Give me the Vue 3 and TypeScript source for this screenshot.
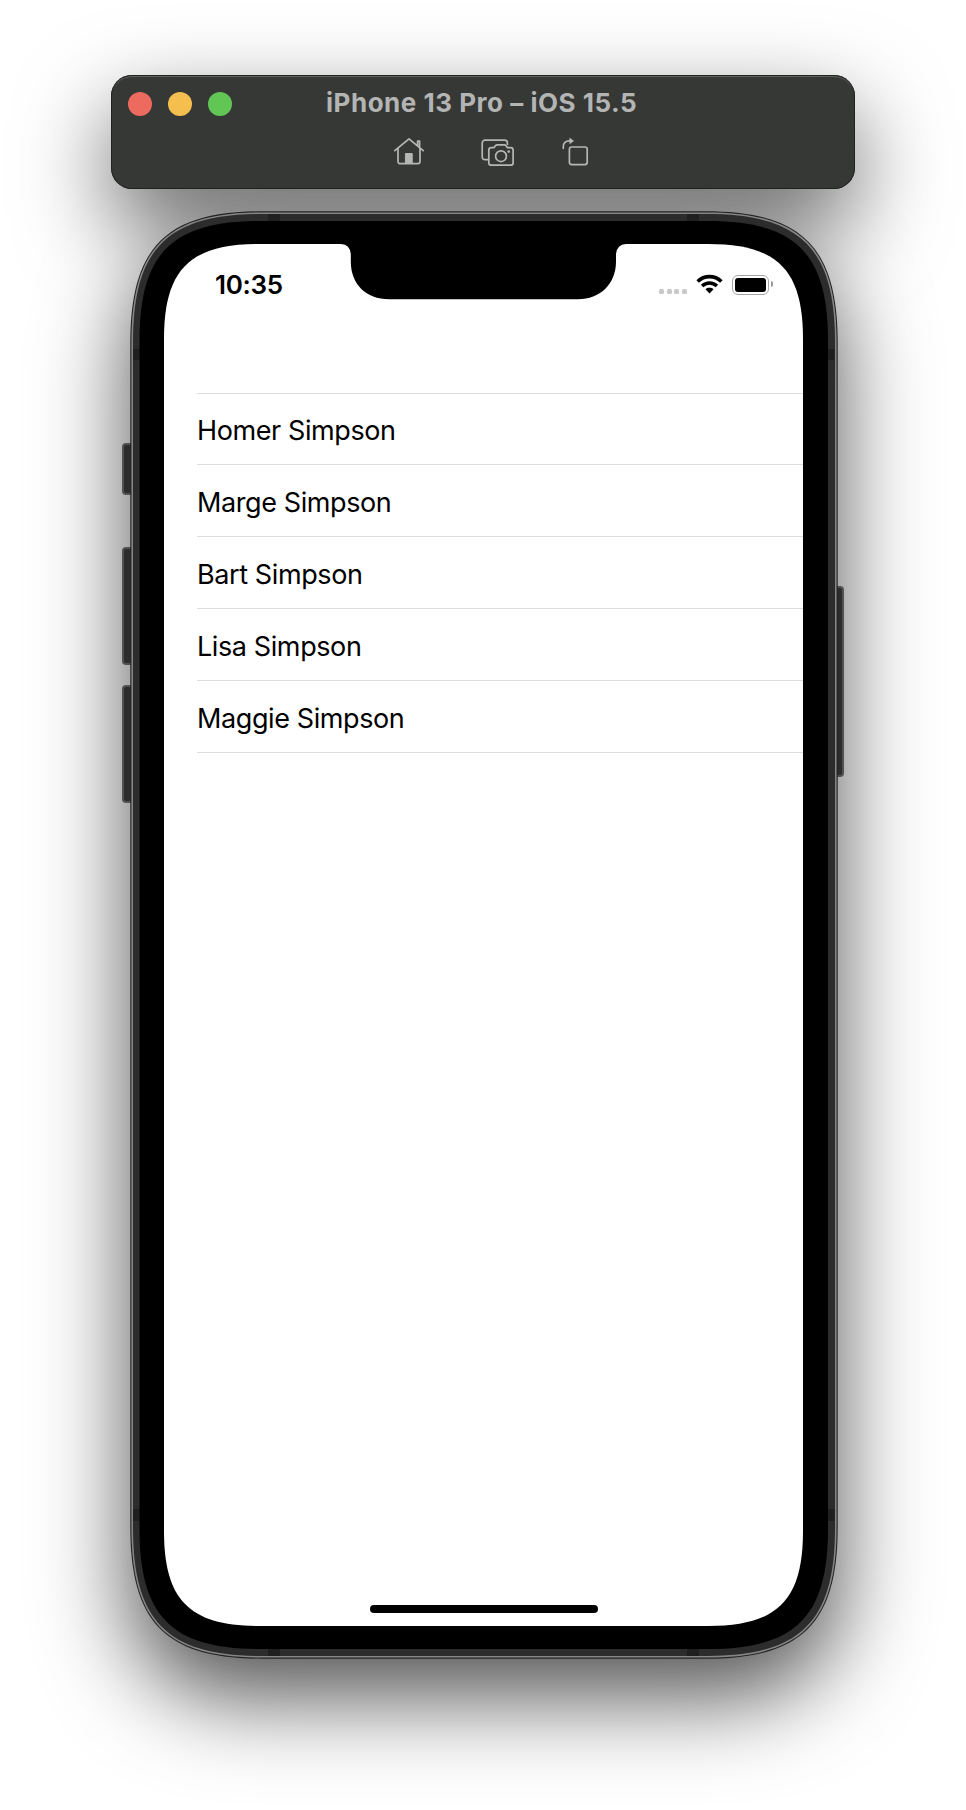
<script setup lang="ts">
const people: string[] = ['Homer Simpson', 'Marge Simpson', 'Bart Simpson', 'Lisa Simpson', 'Maggie Simpson']

/** Closed path of a rectangle whose corners ease in over `a` pixels of each side. */
function smoothRect(x: number, y: number, w: number, h: number, a: number): string {
  const c = a * 0.27
  const r = x + w
  const b = y + h
  return [
    `M${x + a},${y} H${r - a} C${r - c},${y} ${r},${y + c} ${r},${y + a}`,
    `V${b - a} C${r},${b - c} ${r - c},${b} ${r - a},${b}`,
    `H${x + a} C${x + c},${b} ${x},${b - c} ${x},${b - a}`,
    `V${y + a} C${x},${y + c} ${x + c},${y} ${x + a},${y}Z`,
  ].join(' ')
}

const rim = smoothRect(0.3, 0.3, 707.4, 1447.4, 132)
const rimLight = smoothRect(1.4, 1.4, 705.2, 1445.2, 130)
const band = smoothRect(3, 3, 702, 1442, 128)
const bezel = smoothRect(9.5, 10, 688.5, 1428, 120)
const display = smoothRect(34, 33, 639, 1382, 95)
</script>

<template>
  <main class="desktop">
    <header class="toolbar">
      <div class="title-row">
        <div class="lights"><i class="red"></i><i class="yellow"></i><i class="green"></i></div>
        <h1>iPhone 13 Pro – iOS 15.5</h1>
      </div>
      <nav class="actions">
        <svg class="home" width="32" height="30" viewBox="0 0 32 30" fill="none" stroke="#b5b7b6" stroke-width="1.7" stroke-linecap="round" stroke-linejoin="round">
          <path d="M1.800 14.600 16 2.800 30.200 14.600M5 12.500V25.500a2.200 2.200 0 0 0 2.200 2.200h17.600a2.200 2.200 0 0 0 2.200-2.200V12.500M24.600 9.500V5.200h2v5.900" />
          <path d="M12.800 17.500h6.400v10h-6.400z" fill="#b5b7b6" stroke-width="1" />
        </svg>
        <svg class="camera" width="34" height="28" viewBox="0 0 34 28" fill="none" stroke="#b5b7b6" stroke-width="1.7" stroke-linejoin="round">
          <path d="M7.300 20.700H4A2.800 2.800 0 0 1 1.200 17.900V4A2.800 2.800 0 0 1 4 1.200h19.600A2.800 2.800 0 0 1 26.400 4v2" />
          <path d="M10.300 8.600h2.600l1.500-1.900q.7-.8 1.700-.8h7.200q1 0 1.700.8l1.500 1.900h3.100A2.500 2.500 0 0 1 32.100 11.100V23.700A2.500 2.500 0 0 1 29.600 26.200H10.300A2.500 2.500 0 0 1 7.800 23.700V11.100A2.500 2.500 0 0 1 10.300 8.600Z" />
          <circle cx="20" cy="17.200" r="5.400" />
          <circle cx="27.700" cy="12.600" r="1.300" fill="#b5b7b6" stroke="none" />
        </svg>
        <svg class="rotate" width="28" height="29" viewBox="0 0 28 29" fill="none" stroke="#b5b7b6" stroke-width="1.700" stroke-linecap="round">
          <rect x="7.400" y="10" width="17.800" height="17.600" rx="2.300" />
          <path d="M1.300 11.300V9.500a5.700 5.700 0 0 1 5.700-5.700h1.300" />
          <path d="M7.500.6 12 3.900 7.500 7.300Z" fill="#b5b7b6" stroke="none" />
        </svg>
      </nav>
    </header>

    <section class="phone">
      <div class="button mute"></div>
      <div class="button vol-up"></div>
      <div class="button vol-down"></div>
      <div class="button power"></div>
      <svg class="case" width="708" height="1448" viewBox="0 0 708 1448">
        <path :d="rim" fill="#222" />
        <path :d="rimLight" fill="#858585" />
        <path :d="band" fill="#2c2c2c" />
        <path d="M138 3h12v7h-12zM557 3h12v7h-12zM138 1438h12v7h-12zM557 1438h12v7h-12zM3 138h6.500v11H3zM698 138h6.500v11H698zM3 1298h6.500v12H3zM698 1298h6.500v12H698z" fill="#1f1f1f" />
        <path :d="bezel" fill="#000" />
        <path :d="display" fill="#fff" />
        <path d="M211 32.500V33q9 .5 9.800 10V51C221 73 236 88.300 259 88.300H448C470 88.300 485.800 73 486 51V43Q487 33.500 496 33V32.500Z" fill="#000" />
      </svg>
      <div class="screen">
        <div class="status">
          <span class="clock">10:35</span>
          <div class="indicators">
            <div class="signal"><i v-for="n in 4" :key="n"></i></div>
            <svg class="wifi" width="27" height="21" viewBox="0 0 28 21" fill="none" stroke="#000" stroke-width="3.700">
              <path d="M1.700 7.400C8.600.600 19.400.600 26.300 7.400M6.300 12.100c4.300-4.200 11.100-4.200 15.400 0" />
              <path d="M9.800 15.400c2.400-2 6-2 8.400 0L14 19.900Z" fill="#000" stroke="none" />
            </svg>
            <div class="battery"><div class="charge"></div></div><i class="nub"></i>
          </div>
        </div>
        <ul class="list">
          <li v-for="person in people" :key="person">{{ person }}</li>
        </ul>
        <div class="home-indicator"></div>
      </div>
    </section>
  </main>
</template>

<style>
body { margin: 0; background: #fff; }
</style>

<style scoped>
.desktop {
  box-sizing: border-box;
  width: 966px;
  height: 1810px;
  padding-top: 75px;
  overflow: hidden;
  background: #fff;
  font-family: Inter, "Liberation Sans", sans-serif;
}
.toolbar {
  position: relative;
  z-index: 1;
  box-sizing: border-box;
  width: 744px;
  height: 114px;
  margin-left: 111px;
  border-radius: 21px;
  background: #363836;
  box-shadow: inset 0 0 0 1px #202220, inset 0 2px 0 #606260;
}
.title-row { display: flex; height: 58px; padding-left: 17px; align-items: center; }
.lights { display: flex; gap: 16px; width: 198px; }
.lights i { width: 24px; height: 24px; border-radius: 50%; }
.red { background: #ed6a5f; }
.yellow { background: #f5bf50; }
.green { background: #62c655; }
h1 {
  margin: -2px 0 0;
  font-size: 26px;
  font-weight: 700;
  line-height: 34px;
  letter-spacing: .52px;
  color: #b3b5b4;
  white-space: nowrap;
}
.actions { display: flex; }
.home { margin: 3px 0 0 282px; }
.camera { margin: 6px 0 0 56px; }
.rotate { margin: 4px 0 0 47px; }
.phone {
  position: relative;
  width: 708px;
  height: 1448px;
  margin: 22px 0 0 130px;
}
/* Shadows live behind the case so neither one falls on the hardware. */
.phone::before {
  content: "";
  position: absolute;
  left: -19px;
  top: -136px;
  width: 744px;
  height: 114px;
  border-radius: 21px;
  box-shadow: 0 36px 90px rgba(0, 0, 0, .6);
}
.phone::after {
  content: "";
  position: absolute;
  z-index: -1;
  inset: 10px;
  border-radius: 94px;
  box-shadow: 0 38px 90px 10px rgba(0, 0, 0, .68);
}
.phone { z-index: 0; }
.case { position: absolute; inset: 0; }
.button {
  position: absolute;
  box-sizing: border-box;
  left: -8px;
  width: 12px;
  border: 2px solid #515151;
  border-radius: 4px;
  background: #2c2c2c;
}
.mute { top: 232px; height: 52px; }
.vol-up { top: 336px; height: 118px; }
.vol-down { top: 474px; height: 118px; }
.power { left: 702px; top: 375px; height: 191px; }
.screen {
  position: absolute;
  left: 34px;
  top: 33px;
  width: 639px;
  height: 1382px;
  display: flex;
  flex-direction: column;
}
.status { display: flex; justify-content: space-between; height: 149px; }
.clock { padding: 25px 0 0 51px; font-size: 26px; font-weight: 600; line-height: 32px; letter-spacing: -.3px; }
.indicators { display: flex; height: 21px; margin: 30px 30px 0 0; }
.signal { display: flex; gap: 2.700px; align-items: flex-end; margin: 0 9px 1px 0; }
.signal i { width: 5px; height: 5px; border-radius: 1.500px; background: #c9c9c9; }
.battery {
  box-sizing: border-box;
  width: 37px;
  height: 20px;
  margin: .5px 0 0 9px;
  padding: 2px;
  border: 1.500px solid #a4a4a4;
  border-radius: 6px;
}
.charge { height: 100%; border-radius: 3px; background: #000; }
.nub { width: 2px; height: 6px; margin: 7px 0 0 2px; border-radius: 0 3px 3px 0; background: #999; }
.list { margin: 0 0 0 33px; padding: 0; list-style: none; border-top: 1px solid #dedede; }
.list li {
  box-sizing: border-box;
  height: 72px;
  border-bottom: 1px solid #dedede;
  color: #000;
  font-size: 27px;
  line-height: 75px;
  letter-spacing: -.4px;
}
.list li:first-child { height: 71px; line-height: 73px; }
.home-indicator { width: 228px; height: 8px; margin: auto auto 13px 206px; border-radius: 4px; background: #000; }
</style>
